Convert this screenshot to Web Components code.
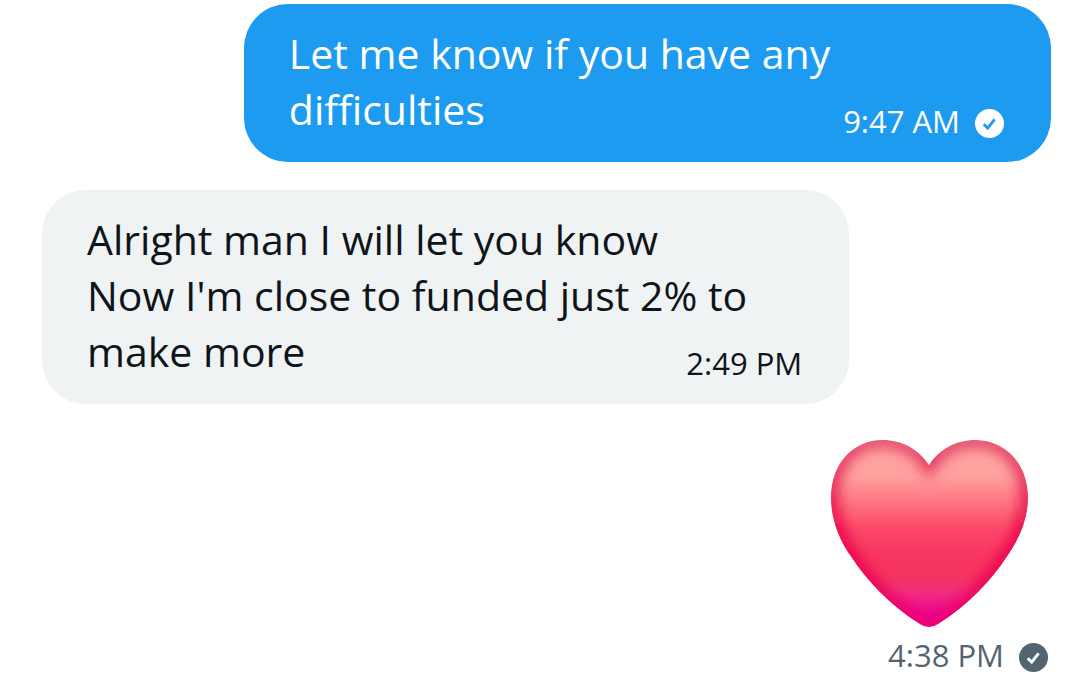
<!DOCTYPE html>
<html lang="en">
<head>
<meta charset="utf-8">
<meta name="viewport" content="width=device-width, initial-scale=1">
<title>Conversation</title>
<style>
  body { margin: 0; background: #fff; color: #0f1419; font-family: "Open Sans", "Noto Sans", sans-serif; }
</style>
</head>
<body>
<chat-thread>
  <chat-bubble side="sent">Let me know if you have any difficulties<message-time slot="time" sent>9:47 AM</message-time></chat-bubble>
  <chat-bubble side="received">Alright man I will let you know<br>Now I'm close to funded just 2% to <span>make more</span><message-time slot="time">2:49 PM</message-time></chat-bubble>
  <chat-sticker>
    <heart-emoji></heart-emoji>
    <message-time slot="time" sent>4:38 PM</message-time>
  </chat-sticker>
</chat-thread>

<template id="chat-thread">
  <style>
    :host { display: block; }
    main { display: flex; flex-direction: column; gap: 28px; padding: 4px 22px 4px 42px; }
  </style>
  <main><slot></slot></main>
</template>

<template id="chat-bubble">
  <style>
    :host { display: grid; box-sizing: border-box; width: 80%; padding: 21px 47px 21px 45px; border-radius: 44px; }
    :host([side="sent"]) { align-self: flex-end; background: #1d9bf0; color: #fff; --check: #1d9bf0; }
    :host([side="received"]) { align-self: flex-start; background: #eff3f4; }
    p { grid-area: 1 / 1; margin: 0; padding-bottom: 4px; font-size: 41px; line-height: 56px; }
    ::slotted(message-time) { grid-area: 1 / 1; align-self: end; justify-self: end; }
  </style>
  <p><slot></slot></p>
  <slot name="time"></slot>
</template>

<template id="chat-sticker">
  <style>
    :host { display: flex; flex-direction: column; align-items: flex-end; gap: 8px; padding-top: 7px; color: #536471; --check: #fff; }
    .art { display: flex; padding-right: 22px; }
    ::slotted(message-time) { padding-right: 3px; }
  </style>
  <div class="art"><slot></slot></div>
  <slot name="time"></slot>
</template>

<template id="message-time">
  <style>
    :host { display: flex; align-items: center; gap: 15px; font-size: 31px; line-height: 40px; white-space: nowrap; }
    svg { display: none; width: 29px; height: 29px; margin-top: 4px; }
    :host([sent]) svg { display: block; }
  </style>
  <time><slot></slot></time>
  <svg viewBox="0 0 29 29" role="img" aria-label="Sent">
    <circle cx="14.5" cy="14.5" r="14.5" fill="currentColor"/>
    <path d="M8.7 15.3l4 3.8 6.9-8.7" fill="none" stroke="var(--check)" stroke-width="2.9"/>
  </svg>
</template>

<template id="heart-emoji">
  <style>
    :host { display: block; }
    svg { display: block; width: 199px; height: 188px; }
  </style>
  <svg viewBox="0 0 197 186" role="img" aria-label="Red heart">
    <defs>
      <path id="shape" d="M98 26C88 10 71 1 52 1C23 1 1 24 1 58C1 80 9 100 22 118C36 139 58 164 89 183Q98 189 107 183C138 164 160 139 174 118C187 100 196 80 196 58C196 24 173 1 144 1C125 1 108 10 98 26Z"/>
      <clipPath id="clip"><use href="#shape"/></clipPath>
      <linearGradient id="body" gradientUnits="userSpaceOnUse" x1="0" y1="0" x2="0" y2="187">
        <stop offset=".1" stop-color="#ffa5a2"/>
        <stop offset=".2" stop-color="#ffa09e"/>
        <stop offset=".35" stop-color="#ff6f7e"/>
        <stop offset=".48" stop-color="#fc4668"/>
        <stop offset=".62" stop-color="#f83660"/>
        <stop offset=".73" stop-color="#f4345f"/>
        <stop offset=".82" stop-color="#f22b80"/>
        <stop offset=".93" stop-color="#ed0290"/>
        <stop offset="1" stop-color="#ec0080"/>
      </linearGradient>
      <linearGradient id="edge" gradientUnits="userSpaceOnUse" x1="0" y1="0" x2="0" y2="187">
        <stop offset="0" stop-color="#e04466"/>
        <stop offset=".3" stop-color="#e5194d"/>
        <stop offset=".5" stop-color="#ea0049"/>
        <stop offset=".8" stop-color="#ea0054"/>
        <stop offset="1" stop-color="#ec0078"/>
      </linearGradient>
      <filter id="soft" filterUnits="userSpaceOnUse" x="-20" y="-20" width="237" height="227"><feGaussianBlur stdDeviation="7"/></filter>
    </defs>
    <g clip-path="url(#clip)">
      <use href="#shape" fill="url(#body)"/>
      <use href="#shape" fill="none" stroke="url(#edge)" stroke-width="14" filter="url(#soft)"/>
    </g>
  </svg>
</template>

<script>
  for (const name of ["chat-thread", "chat-bubble", "chat-sticker", "message-time", "heart-emoji"]) {
    customElements.define(name, class extends HTMLElement {
      constructor() {
        super();
        this.attachShadow({ mode: "open" }).append(document.getElementById(name).content.cloneNode(true));
      }
    });
  }
</script>
</body>
</html>
